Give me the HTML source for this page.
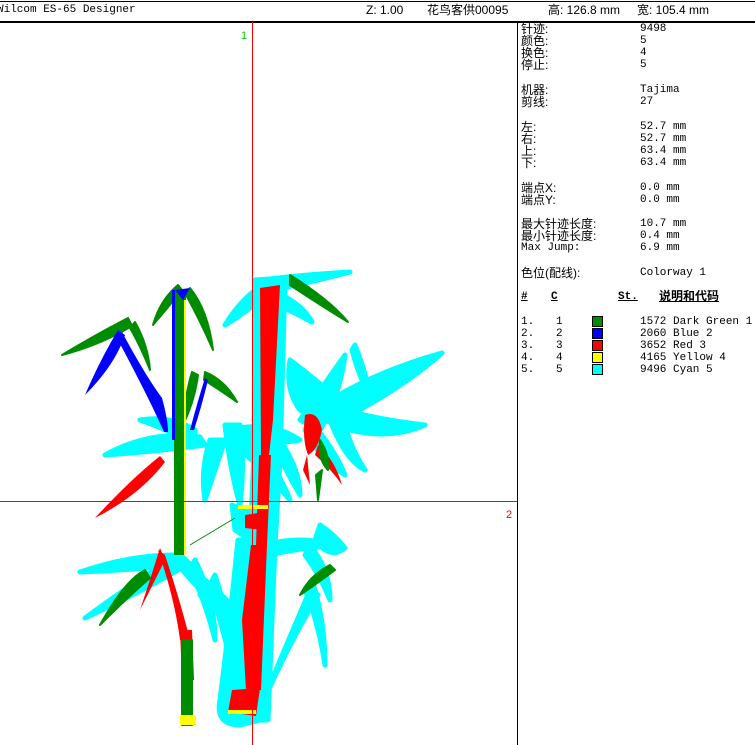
<!DOCTYPE html>
<html><head><meta charset="utf-8">
<style>
body{margin:0;width:755px;height:745px;background:#fff;position:relative;overflow:hidden;font-family:"Liberation Sans","WenQuanYi Zen Hei","Noto Sans CJK SC",sans-serif;font-size:12px;color:#000}
.t{position:absolute;white-space:nowrap;line-height:12px}
.m{font-family:"Liberation Mono","WenQuanYi Zen Hei",monospace;font-size:11px}
.hl{position:absolute;left:0;width:755px;height:1px;background:#000}
.sw{position:absolute;left:592px;width:9px;height:9px;border:1px solid #000}
</style></head><body>
<div class="hl" style="top:1px"></div>
<div class="hl" style="top:21px;height:2px"></div>
<div class="t m" style="left:-3px;top:4px">Wilcom ES-65 Designer</div>
<div class="t" style="left:366px;top:4px">Z: 1.00</div>
<div class="t" style="left:427px;top:4px">花鸟客供00095</div>
<div class="t" style="left:548px;top:4px">高: 126.8 mm</div>
<div class="t" style="left:637px;top:4px">宽: 105.4 mm</div>
<div style="position:absolute;left:517px;top:22px;width:1px;height:723px;background:#000"></div>

<svg style="position:absolute;left:0;top:0" width="517" height="745">
<g fill="#0ff" stroke="#0ff" stroke-width="5" stroke-linejoin="round">
<path d="M200,437 Q150,430 105,455 Q150,452 205,445Z"/>
<path d="M195,430 Q170,415 140,420 Q170,430 195,445Z"/>
<path d="M210,440 Q200,470 205,500 Q215,470 225,440Z"/>
<path d="M225,425 Q230,470 240,505 Q245,465 240,425Z"/>
<path d="M230,430 Q270,420 300,440 Q270,445 235,445Z"/>
<path d="M245,440 Q275,460 290,500 Q265,470 240,450Z"/>
<path d="M262,285 Q240,300 225,325 Q250,310 268,292Z"/>
<path d="M262,280 Q300,275 350,272 Q300,285 262,292Z"/>
<path d="M268,290 Q300,300 312,322 Q290,310 266,300Z"/>
<path d="M290,360 Q330,390 360,420 Q335,430 300,410 Q285,390 290,360Z"/>
<path d="M300,420 Q320,390 345,355 Q340,395 320,430Z"/>
<path d="M330,400 Q380,370 442,353 Q400,390 340,420Z"/>
<path d="M345,410 Q380,420 425,425 Q390,440 350,430Z"/>
<path d="M340,400 Q345,440 365,470 Q345,460 330,420Z"/>
<path d="M355,345 Q365,370 370,395 Q360,380 352,350Z"/>
<path d="M280,440 Q300,470 300,495 Q285,470 275,445Z"/>
<path d="M310,420 Q335,450 345,475 Q320,460 305,430Z"/>
<path d="M175,555 Q130,555 80,572 Q130,570 180,565Z"/>
<path d="M170,560 Q130,585 85,618 Q135,595 178,570Z"/>
<path d="M180,555 Q200,570 210,600 Q195,585 178,565Z"/>
<path d="M195,560 Q215,600 215,640 Q205,600 190,570Z"/>
<path d="M215,575 Q230,620 228,650 Q220,620 210,585Z"/>
<path d="M205,580 Q240,610 260,640 Q235,620 200,595Z"/>
<path d="M265,545 Q300,535 335,545 Q300,548 268,555Z"/>
<path d="M310,545 Q330,570 330,600 Q320,575 305,555Z"/>
<path d="M312,580 Q325,620 325,665 Q318,620 305,590Z"/>
<path d="M310,590 Q280,660 255,720 Q285,650 318,595Z"/>
<path d="M320,525 Q335,535 345,548 Q330,560 315,540Z"/>
<path d="M232,505 Q240,510 272,505 L275,540 Q255,545 235,530Z"/>
<path d="M238,540 Q230,620 220,700 Q215,725 240,725 L260,720 L255,540Z"/>
<path d="M255,280 L285,278 L280,460 L275,545 L268,720 L245,720 L250,545 L254,450Z"/>
</g>
<g fill="#f00">
<path d="M260,288 L280,285 L273,420 L269,455 L261,455Z"/>
<path d="M259,455 L271,455 L267,545 L256,545Z"/>
<path d="M245,515 L265,512 L262,530 L245,528Z"/>
<path d="M251,545 L267,545 L261,690 L246,690 L242,620Z"/>
<path d="M232,690 L260,688 L256,716 L228,712Z"/>
<path d="M160,456 Q130,480 95,518 Q140,495 165,462Z"/>
<path d="M305,415 Q318,410 322,430 Q318,450 308,455 Q302,440 305,415Z"/>
<path d="M318,445 Q335,460 342,485 Q332,470 315,455Z"/>
<path d="M307,455 L310,485 L303,470Z"/>
<path d="M160,548 Q150,580 140,610 Q150,590 165,560Z"/>
<path d="M158,550 Q175,600 180,640 L190,640 Q180,600 165,555Z"/>
<path d="M180,630 L192,630 L194,680 L182,680Z"/>
</g>
<g fill="#008c00" stroke="#008c00" stroke-width="2" stroke-linejoin="round">
<rect x="175" y="292" width="10" height="262"/>
<rect x="182" y="640" width="10" height="85"/>
<path d="M178,285 Q160,300 153,325 Q170,305 182,290Z"/>
<path d="M190,288 Q208,310 213,350 Q200,320 186,295Z"/>
<path d="M128,318 Q95,335 62,355 Q100,345 132,326Z"/>
<path d="M135,322 Q148,345 150,370 Q140,345 130,328Z"/>
<path d="M192,372 Q185,395 183,425 Q195,400 198,375Z"/>
<path d="M205,372 Q225,380 237,402 Q220,390 204,380Z"/>
<path d="M290,275 Q330,300 348,322 Q320,305 290,285Z"/>
<path d="M320,440 Q330,455 328,470 Q318,460 320,440Z"/>
<path d="M322,470 L318,500 L316,475Z"/>
<path d="M145,570 Q125,580 100,625 Q130,595 150,578Z"/>
<path d="M330,565 Q310,575 300,595 Q315,585 335,570Z"/>
</g>
<g fill="#00f">
<path d="M175,290 L190,288 L183,300Z"/>
<path d="M118,330 Q100,360 85,395 Q115,365 125,335Z"/>
<path d="M122,332 Q145,375 162,398 Q168,420 168,432 L164,432 Q150,400 118,340Z"/>
<path d="M205,378 Q198,400 190,430 L194,430 Q202,405 208,380Z"/>
<rect x="172" y="290" width="3" height="150"/>
</g>
<g fill="#ff0">
<rect x="184" y="300" width="2" height="255"/>
<rect x="180" y="715" width="16" height="10"/>
<rect x="238" y="505" width="30" height="4"/>
<rect x="228" y="710" width="28" height="4"/>
</g>
<line x1="190" y1="545" x2="235" y2="518" stroke="#080" stroke-width="1"/>
<rect x="252" y="22" width="1" height="723" fill="#f00"/>
<rect x="0" y="501" width="517" height="1" fill="#f00"/>
</svg>
<div class="t" style="left:241px;top:30px;color:#0c0;font-size:11px">1</div>
<div class="t" style="left:506px;top:509px;color:#f00;font-size:11px">2</div>

<div class="t" style="left:521px;top:23px">针迹:</div><div class="t m" style="left:640px;top:23px">9498</div>
<div class="t" style="left:521px;top:35px">颜色:</div><div class="t m" style="left:640px;top:35px">5</div>
<div class="t" style="left:521px;top:47px">换色:</div><div class="t m" style="left:640px;top:47px">4</div>
<div class="t" style="left:521px;top:59px">停止:</div><div class="t m" style="left:640px;top:59px">5</div>
<div class="t" style="left:521px;top:84px">机器:</div><div class="t m" style="left:640px;top:84px">Tajima</div>
<div class="t" style="left:521px;top:96px">剪线:</div><div class="t m" style="left:640px;top:96px">27</div>
<div class="t" style="left:521px;top:121px">左:</div><div class="t m" style="left:640px;top:121px">52.7 mm</div>
<div class="t" style="left:521px;top:133px">右:</div><div class="t m" style="left:640px;top:133px">52.7 mm</div>
<div class="t" style="left:521px;top:145px">上:</div><div class="t m" style="left:640px;top:145px">63.4 mm</div>
<div class="t" style="left:521px;top:157px">下:</div><div class="t m" style="left:640px;top:157px">63.4 mm</div>
<div class="t" style="left:521px;top:182px">端点X:</div><div class="t m" style="left:640px;top:182px">0.0 mm</div>
<div class="t" style="left:521px;top:194px">端点Y:</div><div class="t m" style="left:640px;top:194px">0.0 mm</div>
<div class="t" style="left:521px;top:218px">最大针迹长度:</div><div class="t m" style="left:640px;top:218px">10.7 mm</div>
<div class="t" style="left:521px;top:230px">最小针迹长度:</div><div class="t m" style="left:640px;top:230px">0.4 mm</div>
<div class="t m" style="left:521px;top:242px">Max Jump:</div><div class="t m" style="left:640px;top:242px">6.9 mm</div>
<div class="t" style="left:521px;top:267px">色位(配线):</div><div class="t m" style="left:640px;top:267px">Colorway 1</div>
<div class="t m" style="left:521px;top:291px;font-weight:bold;text-decoration:underline">#</div>
<div class="t m" style="left:551px;top:291px;font-weight:bold;text-decoration:underline">C</div>
<div class="t m" style="left:618px;top:291px;font-weight:bold;text-decoration:underline">St.</div>
<div class="t" style="left:659px;top:290px;font-weight:bold;text-decoration:underline">说明和代码</div>
<div class="t m" style="left:521px;top:316px">1.</div><div class="t m" style="left:556px;top:316px">1</div><div class="sw" style="top:316px;background:#008c00"></div><div class="t m" style="left:640px;top:316px">1572  Dark Green 1</div>
<div class="t m" style="left:521px;top:328px">2.</div><div class="t m" style="left:556px;top:328px">2</div><div class="sw" style="top:328px;background:#00f"></div><div class="t m" style="left:640px;top:328px">2060  Blue 2</div>
<div class="t m" style="left:521px;top:340px">3.</div><div class="t m" style="left:556px;top:340px">3</div><div class="sw" style="top:340px;background:#f00"></div><div class="t m" style="left:640px;top:340px">3652  Red 3</div>
<div class="t m" style="left:521px;top:352px">4.</div><div class="t m" style="left:556px;top:352px">4</div><div class="sw" style="top:352px;background:#ff0"></div><div class="t m" style="left:640px;top:352px">4165  Yellow 4</div>
<div class="t m" style="left:521px;top:364px">5.</div><div class="t m" style="left:556px;top:364px">5</div><div class="sw" style="top:364px;background:#0ff"></div><div class="t m" style="left:640px;top:364px">9496  Cyan 5</div>
</body></html>
